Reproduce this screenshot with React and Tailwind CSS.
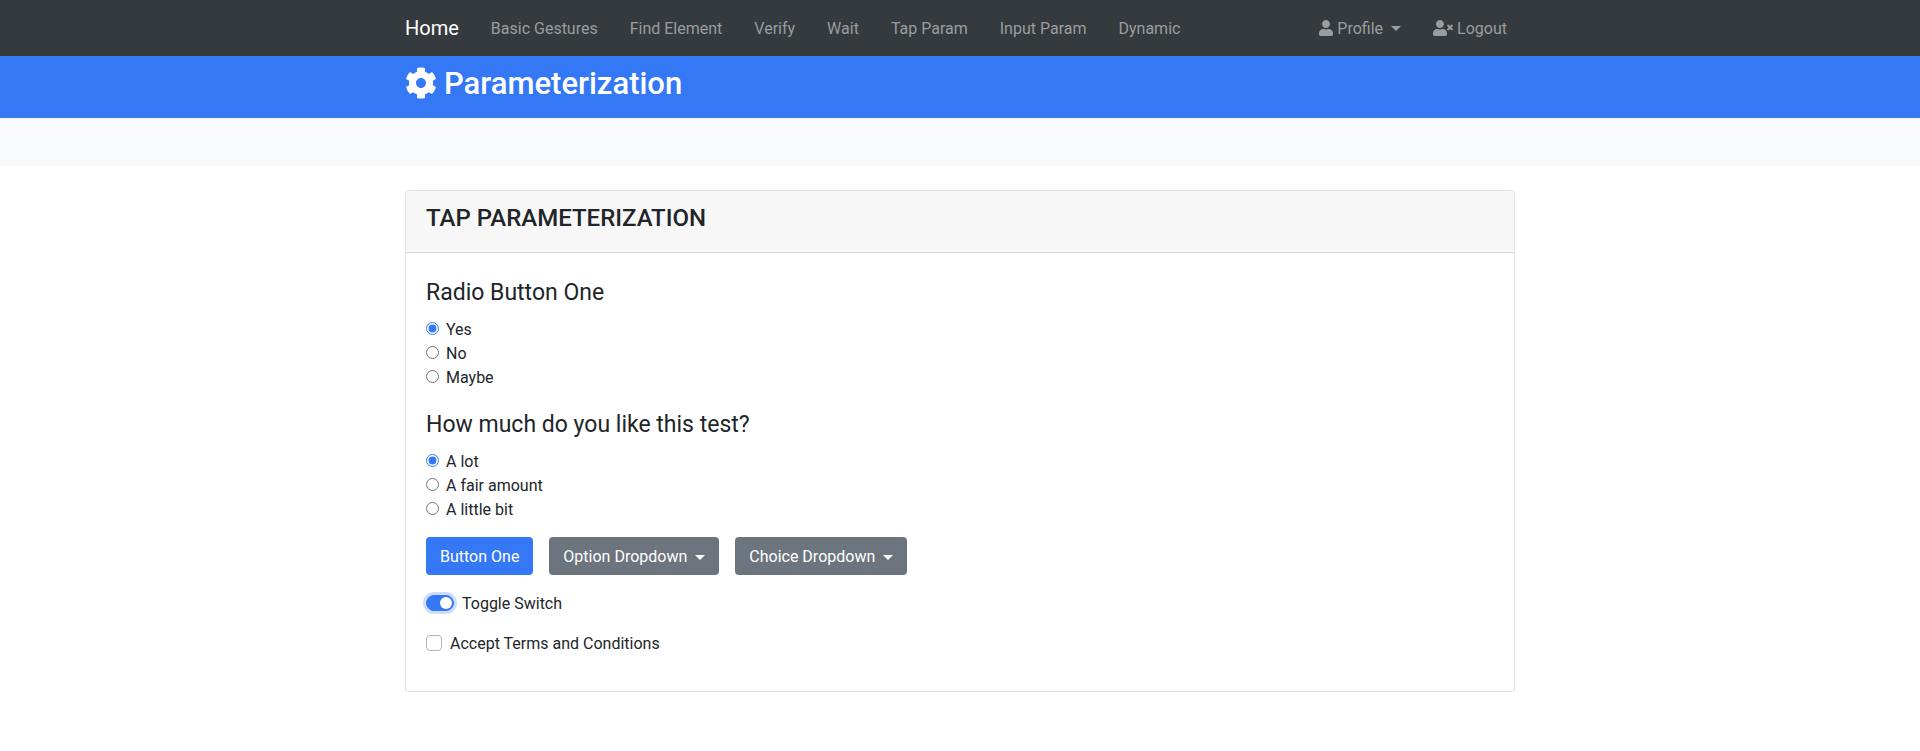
import { useState } from "react";
import { FaCog, FaUser, FaUserTimes } from "react-icons/fa";

const navItems = [
  "Basic Gestures",
  "Find Element",
  "Verify",
  "Wait",
  "Tap Param",
  "Input Param",
  "Dynamic",
];

function Caret() {
  return (
    <span
      aria-hidden="true"
      className="ml-2 inline-block border-x-5 border-t-5 border-x-transparent border-t-current align-middle"
    />
  );
}

function NavBar() {
  return (
    <nav className="bg-[#353a3e] text-[#9a9d9f]">
      <div className="mx-auto flex h-14 max-w-[1110px] items-center justify-between">
        <div className="flex items-center gap-8">
          <a href="#home" className="text-xl leading-8 text-white">
            Home
          </a>
          {navItems.map((item) => (
            <a key={item} href="#nav" className="pt-0.5">
              {item}
            </a>
          ))}
        </div>
        <div className="flex items-center gap-8 pr-2">
          <button type="button" className="flex items-center">
            <FaUser className="mr-1 h-4 w-3.5" />
            <span className="pt-0.5">Profile</span>
            <Caret />
          </button>
          <a href="#logout" className="flex items-center">
            <FaUserTimes className="mr-1 h-4 w-5" />
            <span className="pt-0.5">Logout</span>
          </a>
        </div>
      </div>
    </nav>
  );
}

function RadioGroup({ title, name, options }) {
  const [selected, setSelected] = useState(options[0]);
  return (
    <fieldset>
      <legend className="mb-[9px] text-[23px] leading-[31px]">{title}</legend>
      {options.map((option) => (
        <label key={option} className="flex h-6 w-fit items-start gap-[7px] leading-[26px]">
          <input
            type="radio"
            name={name}
            checked={selected === option}
            onChange={() => setSelected(option)}
            className="mt-[5px] size-[13px] accent-[#3478f6]"
          />
          {option}
        </label>
      ))}
    </fieldset>
  );
}

function Button({ className, children }) {
  return (
    <button
      type="button"
      className={`flex h-[38px] items-center rounded px-3.5 pt-0.5 text-white ${className}`}
    >
      {children}
    </button>
  );
}

export default function App() {
  const [on, setOn] = useState(true);
  const [accepted, setAccepted] = useState(false);
  return (
    <div className="font-['Roboto','Liberation_Sans',sans-serif] text-base leading-6 text-[#212529]">
      <NavBar />
      <header className="bg-[#3478f6] text-white">
        <div className="mx-auto flex max-w-[1110px] items-start gap-[7px] pt-2 pb-3.5">
          <FaCog className="my-[3px] size-8" />
          <h1 className="text-[31px] leading-10 font-medium">Parameterization</h1>
        </div>
      </header>
      <div className="h-12 bg-[#f8f9fa]" />
      <main className="mx-auto mt-6 max-w-[1110px] rounded border border-[#dfdfdf]">
        <div className="rounded-t border-b border-[#d8d8d8] bg-[#f7f7f7] px-5 pt-3 pb-[18px]">
          <h2 className="text-2xl leading-[31px] font-medium">TAP PARAMETERIZATION</h2>
        </div>
        <div className="px-5 pt-6 pb-9">
          <div className="flex flex-col gap-5">
            <RadioGroup
              title="Radio Button One"
              name="first"
              options={["Yes", "No", "Maybe"]}
            />
            <RadioGroup
              title="How much do you like this test?"
              name="liking"
              options={["A lot", "A fair amount", "A little bit"]}
            />
          </div>
          <div className="mt-4 flex flex-col gap-4">
            <div className="flex flex-wrap gap-4">
              <Button className="bg-[#3478f6]">Button One</Button>
              <Button className="bg-[#6c757d]">
                Option Dropdown
                <Caret />
              </Button>
              <Button className="bg-[#6c757d]">
                Choice Dropdown
                <Caret />
              </Button>
            </div>
            <label className="flex h-6 w-fit items-start gap-2 leading-[26px]">
              <input
                type="checkbox"
                role="switch"
                checked={on}
                onChange={() => setOn(!on)}
                className="mt-1 flex h-4 w-7 appearance-none items-center rounded-full border border-[#adb5bd] px-px ring-3 ring-[#3478f6]/25 before:size-3 before:rounded-full before:bg-[#adb5bd] checked:justify-end checked:border-[#3478f6] checked:bg-[#3478f6] checked:before:bg-white"
              />
              Toggle Switch
            </label>
            <label className="flex h-6 w-fit items-start gap-2 leading-[26px]">
              <input
                type="checkbox"
                checked={accepted}
                onChange={() => setAccepted(!accepted)}
                className="mt-1 size-4 appearance-none rounded border border-[#adb5bd] bg-white checked:border-[#3478f6] checked:bg-[#3478f6]"
              />
              Accept Terms and Conditions
            </label>
          </div>
        </div>
      </main>
    </div>
  );
}
